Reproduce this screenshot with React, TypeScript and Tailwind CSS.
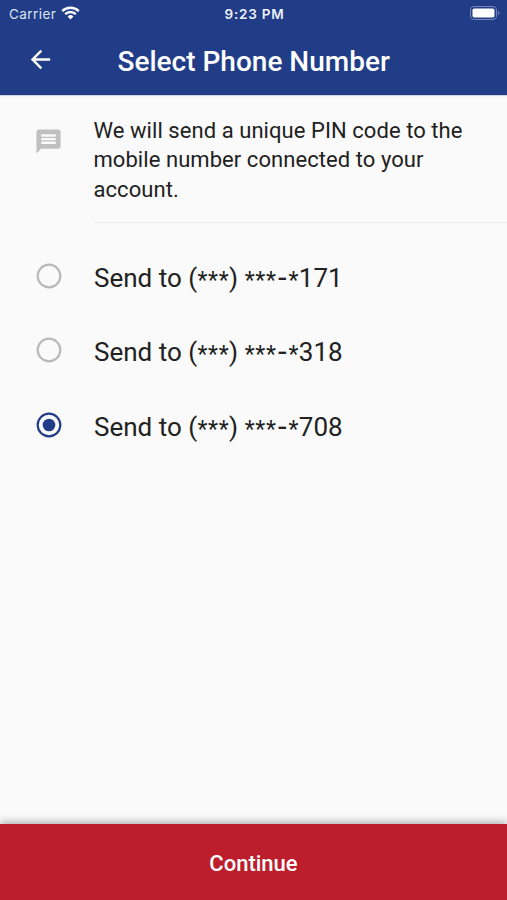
const numbers = ["171", "318", "708"];

function Stars({ count }: { count: number }) {
  return (
    <>
      {Array.from({ length: count }, (_, i) => (
        <span key={i} className="inline-block w-[10.6px] text-center align-[-1px] text-[23px] leading-none">*</span>
      ))}
    </>
  );
}

export default function App() {
  return (
    <div className="flex h-[900px] w-[507px] flex-col overflow-hidden bg-[#fafafa] font-['Roboto',sans-serif] text-[#212121]">
      <header className="h-[95px] shrink-0 bg-[#213d87] text-white shadow-[0_1px_1px_rgba(33,61,135,0.2)]">
        <div className="grid h-7 grid-cols-3 items-center pl-[9px] pr-[7px] font-['Inter',sans-serif] text-[13.5px]">
          <div className="flex items-center gap-[5px]">
            <span className="tracking-[0.45px] text-[#dde2f0]">Carrier</span>
            <svg className="-mt-0.5" width="19" height="14" viewBox="0 0 19 14" fill="none" stroke="currentColor" strokeWidth="2.4">
              <path d="M1.2 5.1a11.8 11.8 0 0 1 16.6 0M4.2 8.2a7.5 7.5 0 0 1 10.6 0" />
              <path d="M6.6 10.5a4.1 4.1 0 0 1 5.8 0L9.5 13.4z" fill="currentColor" stroke="none" />
            </svg>
          </div>
          <span className="text-center font-semibold tracking-[0.75px] text-[#eef1f8]">9:23 PM</span>
          <svg className="-mt-0.5 justify-self-end" width="31" height="14" viewBox="0 0 31 14">
            <rect x="1.5" y=".5" width="26" height="13" rx="3.5" fill="none" stroke="#7485b6" />
            <rect x="3.5" y="2.5" width="22" height="9" rx="1.8" fill="white" />
            <path d="M29 5v4q1.5-.5 1.5-2t-1.5-2z" fill="#7485b6" />
          </svg>
        </div>
        <div className="flex h-[67px] items-center pl-[26px]">
          <svg className="-mt-[4px]" width="29" height="29" viewBox="0 0 24 24" fill="white">
            <path d="M20 11H7.83l5.59-5.59L12 4l-8 8 8 8 1.41-1.41L7.83 13H20z" />
          </svg>
          <h1 className="ml-[62.5px] text-[28px] font-medium">Select Phone Number</h1>
        </div>
      </header>
      <main className="flex-1">
        <section className="flex h-[128px] pl-[34px]">
          <svg className="mt-8 shrink-0" width="29" height="29" viewBox="0 0 24 24" fill="#c0c0c0">
            <path d="M20 2H4c-1.1 0-1.99.9-1.99 2L2 22l4-4h14c1.1 0 2-.9 2-2V4c0-1.1-.9-2-2-2zm-2 12H6v-2h12v2zm0-3H6V9h12v2zm0-3H6V6h12v2z" />
          </svg>
          <p className="ml-[30.5px] flex-1 border-b border-[#ebebeb] pt-[20.8px] text-[22px] leading-[29.5px] tracking-[0.06px]">
            We will send a unique PIN code to the<br />mobile number connected to your<br />account.
          </p>
        </section>
        <div className="pt-[15.5px]" role="radiogroup">
          {numbers.map((n) => (
            <label key={n} className="flex h-[74.5px] items-center pl-[35.5px]">
              <svg width="26" height="26" viewBox="0 0 26 26" fill="none">
                <circle cx="13" cy="13" r="11.3" stroke={n === "708" ? "#213d87" : "#b9b9b9"} strokeWidth="2.2" />
                {n === "708" && <circle cx="13" cy="13" r="6.3" fill="#213d87" />}
              </svg>
              <span className="ml-[32.5px] whitespace-nowrap pt-[4px] text-[26px] leading-8">
                Send to (<Stars count={3} />) <Stars count={3} />
                <span className="inline-block w-[12px] text-center align-[-1px] text-[31px] leading-none">-</span>
                <Stars count={1} />{n}
              </span>
            </label>
          ))}
        </div>
      </main>
      <button className="h-[76px] shrink-0 bg-[#bd1e2c] pt-[3px] text-[22px] font-medium text-white shadow-[0_-2px_8px_rgba(0,0,0,0.3)]">Continue</button>
    </div>
  );
}
